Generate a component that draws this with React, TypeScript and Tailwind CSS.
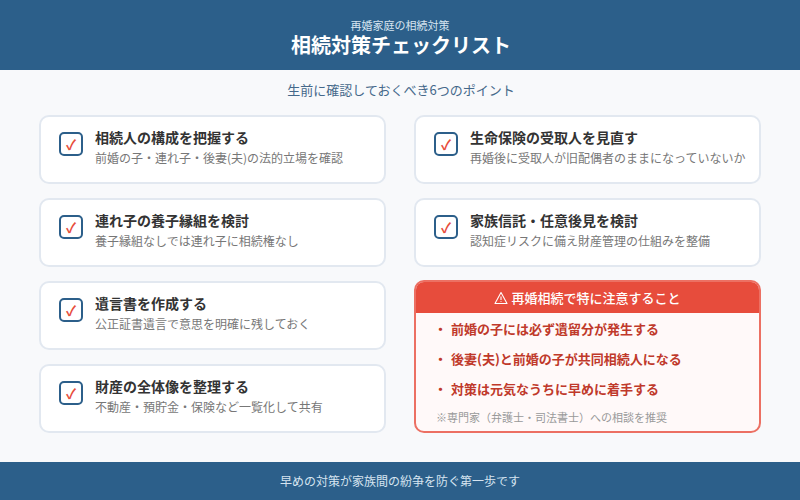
import React from "react";

const jp = "font-['Noto_Sans_CJK_JP','Noto_Sans',sans-serif]";

const CheckCard = ({ title, desc }: { title: string; desc: string }) => (
  <div className="h-[69px] bg-white border-2 border-[#e2e8f0] rounded-[10px] flex items-start pl-[18px] pr-2 pt-[10px] gap-[12px]">
    <div className="w-[24px] h-[24px] mt-[5px] shrink-0 border-2 border-[#2c5f8a] rounded-[5px] flex items-center justify-center text-[14px] font-bold leading-none text-[#e74c3c]">
      ✓
    </div>
    <div className="min-w-0">
      <div className="text-[14px] leading-[20px] font-bold text-[#333333] whitespace-nowrap">{title}</div>
      <div className="text-[12px] leading-[22px] text-[#777777] whitespace-nowrap">{desc}</div>
    </div>
  </div>
);

const left = [
  { title: "相続人の構成を把握する", desc: "前婚の子・連れ子・後妻(夫)の法的立場を確認" },
  { title: "連れ子の養子縁組を検討", desc: "養子縁組なしでは連れ子に相続権なし" },
  { title: "遺言書を作成する", desc: "公正証書遺言で意思を明確に残しておく" },
  { title: "財産の全体像を整理する", desc: "不動産・預貯金・保険など一覧化して共有" },
];

const right = [
  { title: "生命保険の受取人を見直す", desc: "再婚後に受取人が旧配偶者のままになっていないか" },
  { title: "家族信託・任意後見を検討", desc: "認知症リスクに備え財産管理の仕組みを整備" },
];

const cautions = [
  "前婚の子には必ず遺留分が発生する",
  "後妻(夫)と前婚の子が共同相続人になる",
  "対策は元気なうちに早めに着手する",
];

export default function App() {
  return (
    <div className={`w-[800px] h-[500px] bg-[#f8f9fb] flex flex-col overflow-hidden ${jp}`}>
      {/* Header */}
      <div className="h-[70px] bg-[#2c5f8a] flex flex-col items-center justify-center pt-[5px]">
        <div className="text-[11px] leading-[14px] text-[#d6e4f0]">再婚家庭の相続対策</div>
        <div className="text-[20px] leading-[26px] pl-[2px] font-bold text-white">相続対策チェックリスト</div>
      </div>

      <div className="h-[40px] pl-[2px] flex items-center justify-center text-[13px] text-[#44688a]">
        生前に確認しておくべき6つのポイント
      </div>

      {/* Main columns */}
      <div className="flex-1 grid grid-cols-2 gap-x-[28px] px-[39px] pt-[5px]">
        <div className="flex flex-col gap-[14px]">
          {left.map((c) => (
            <CheckCard key={c.title} {...c} />
          ))}
        </div>
        <div className="flex flex-col gap-[14px]">
          {right.map((c) => (
            <CheckCard key={c.title} {...c} />
          ))}
          <div className="h-[153px] -mt-[1px] bg-[#fff9f9] border-2 border-[#ec7063] rounded-[10px] overflow-hidden">
            <div className="h-[31px] bg-[#e74c3c] flex items-center justify-center gap-[3px] text-white text-[13px] font-medium">
              <svg width="14" height="14" viewBox="0 0 14 14" fill="none" stroke="white" strokeWidth="1.1" strokeLinejoin="round">
                <path d="M7 1.5 L13 12.5 H1 Z" />
                <path d="M7 5.5 V9" />
                <path d="M7 10.2 V11" />
              </svg>
              <span>再婚相続で特に注意すること</span>
            </div>
            <div className="pl-[18px] pt-[1px]">
              {cautions.map((t) => (
                <div key={t} className="h-[30px] flex items-center text-[13px] font-bold text-[#c0392b] whitespace-nowrap">
                  <span className="w-[17px] shrink-0">・</span>
                  <span>{t}</span>
                </div>
              ))}
              <div className="mt-[5px] pl-[2px] text-[11px] leading-[16px] text-[#999999]">※専門家（弁護士・司法書士）への相談を推奨</div>
            </div>
          </div>
        </div>
      </div>

      {/* Footer */}
      <div className="h-[38px] bg-[#2c5f8a] flex items-center justify-center text-[12px] text-[#d6e4f0]">
        早めの対策が家族間の紛争を防ぐ第一歩です
      </div>
    </div>
  );
}
